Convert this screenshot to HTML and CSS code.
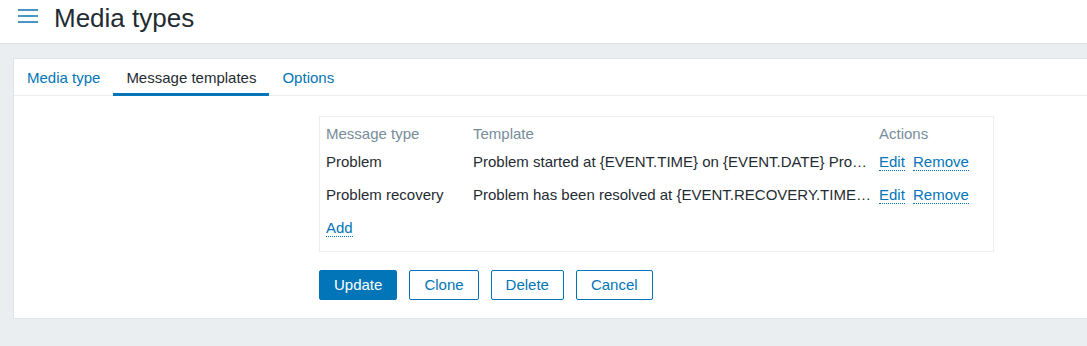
FILE: index.html
```html
<!DOCTYPE html>
<html lang="en">
<head>
    <meta charset="UTF-8">
    <title>Media types</title>
    <link rel="stylesheet" href="styles.css">
</head>
<body>
    <header class="page-header">
        <svg class="menu-icon" width="20" height="14" viewBox="0 0 20 14">
            <rect x="0" y="0" width="20" height="2" fill="#4796c4"/>
            <rect x="0" y="6" width="20" height="2" fill="#4796c4"/>
            <rect x="0" y="12" width="20" height="2" fill="#4796c4"/>
        </svg>
        <h1 class="page-title">Media types</h1>
    </header>

    <main class="card">
        <ul class="tabs">
            <li class="tab"><a href="#">Media type</a></li>
            <li class="tab active"><a href="#">Message templates</a></li>
            <li class="tab"><a href="#">Options</a></li>
        </ul>

        <div class="tab-content">
            <div class="form-list">
                <div class="form-label"></div>
                <div class="form-field">
                    <div class="table-box">
                        <table class="templates">
                            <colgroup>
                                <col class="col-type">
                                <col class="col-template">
                                <col class="col-actions">
                            </colgroup>
                            <thead>
                                <tr>
                                    <th>Message type</th>
                                    <th>Template</th>
                                    <th>Actions</th>
                                </tr>
                            </thead>
                            <tbody>
                                <tr>
                                    <td>Problem</td>
                                    <td class="template-text">Problem started at {EVENT.TIME} on {EVENT.DATE} Problem name: {EVENT.NAME} Host: {HOST.NAME}</td>
                                    <td><a class="link-action" href="#">Edit</a> <a class="link-action" href="#">Remove</a></td>
                                </tr>
                                <tr>
                                    <td>Problem recovery</td>
                                    <td class="template-text">Problem has been resolved at {EVENT.RECOVERY.TIME} on {EVENT.RECOVERY.DATE}</td>
                                    <td><a class="link-action" href="#">Edit</a> <a class="link-action" href="#">Remove</a></td>
                                </tr>
                                <tr>
                                    <td colspan="3"><a class="link-action" href="#">Add</a></td>
                                </tr>
                            </tbody>
                        </table>
                    </div>
                </div>

                <div class="form-label"></div>
                <div class="form-field buttons">
                    <button class="btn btn-primary">Update</button>
                    <button class="btn btn-alt">Clone</button>
                    <button class="btn btn-alt">Delete</button>
                    <button class="btn btn-alt">Cancel</button>
                </div>
            </div>
        </div>
    </main>
</body>
</html>
```

FILE: styles.css
```css
body {
    margin: 0;
    padding: 0;
    overflow: hidden;
    background-color: #ebeef0;
    font-family: "Liberation Sans", Arial, sans-serif;
    font-size: 15px;
    line-height: 18px;
    color: #1f2c33;
}

a {
    color: #0275b8;
    text-decoration: none;
}

/* header */
.page-header {
    display: flex;
    align-items: flex-start;
    height: 40px;
    padding: 3px 0 0 18px;
    background: #ffffff;
    border-bottom: 1px solid #dbe0e3;
}

.menu-icon {
    margin-top: 6px;
    flex-shrink: 0;
}

.page-title {
    margin: 0 0 0 16px;
    font-size: 26px;
    line-height: 30px;
    font-weight: normal;
    color: #1f2c33;
}

/* card with tabs */
.card {
    margin: 14px 0 0 13px;
    width: 1100px;
    background: #ffffff;
    border: 1px solid #dfe4e7;
}

.tabs {
    display: flex;
    margin: 0;
    padding: 0;
    list-style: none;
    border-bottom: 1px solid #ebeef0;
}

.tab {
    margin-bottom: -1px;
    padding: 10px 13px 6px;
    border-bottom: 3px solid transparent;
}

.tab.active {
    border-bottom-color: #0275b8;
}

.tab.active a {
    color: #1f2c33;
}

.tab-content {
    padding: 20px 0 18px;
}

.form-list {
    display: grid;
    grid-template-columns: 305px 675px;
    row-gap: 18px;
}

/* templates table */
.table-box {
    border: 1px solid #ebeef0;
    padding-bottom: 6px;
}

.templates {
    width: 100%;
    table-layout: fixed;
    border-collapse: collapse;
}

.col-type { width: 147px; }
.col-template { width: 406px; }

.templates th {
    padding: 8px 6px 3px;
    text-align: left;
    font-weight: normal;
    color: #768d99;
}

.templates td {
    padding: 7px 6px 8px;
    white-space: nowrap;
}

.templates td.template-text {
    padding-right: 2px;
    overflow: hidden;
    text-overflow: ellipsis;
}

.link-action {
    border-bottom: 1px dotted #0275b8;
}

.link-action + .link-action {
    margin-left: 4px;
}

/* buttons */
.buttons {
    display: flex;
    gap: 12px;
}

.btn {
    height: 30px;
    padding: 0 14px;
    border: 1px solid #0275b8;
    border-radius: 2px;
    font-family: "Liberation Sans", Arial, sans-serif;
    font-size: 15px;
    line-height: 28px;
    cursor: pointer;
}

.btn-primary {
    background: #0275b8;
    color: #ffffff;
}

.btn-alt {
    background: #ffffff;
    color: #0275b8;
}
```
